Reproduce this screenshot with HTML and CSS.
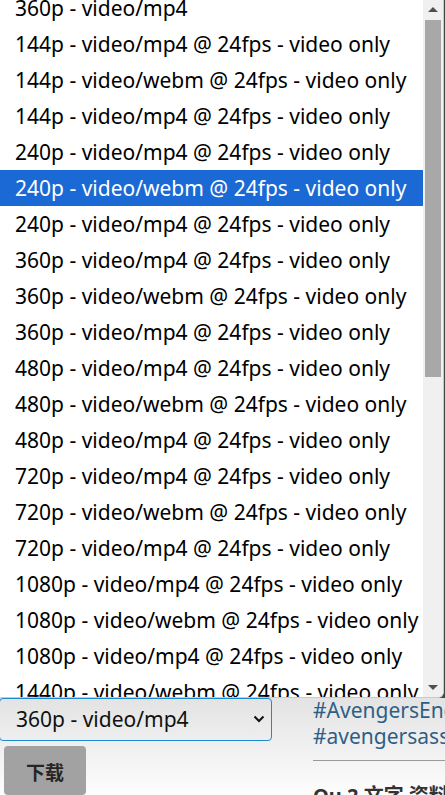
FILE: index.html
```html
<!DOCTYPE html>
<html lang="zh">
<head>
<meta charset="utf-8">
<link rel="stylesheet" href="styles.css">
</head>
<body>
<div class="page">
  <div class="left">
    <div class="select">
      <span class="select-text">360p - video/mp4</span>
      <svg class="chev" width="12" height="8" viewBox="0 0 12 8"><path d="M1.5 1.5 L6 6 L10.5 1.5" fill="none" stroke="#111" stroke-width="2"/></svg>
    </div>
    <div class="btn">下载</div>
  </div>
  <div class="right">
    <div class="tag">#AvengersEndgame</div>
    <div class="tag">#avengersassemble</div>
    <div class="rule"></div>
    <div class="more">Ou 2 文字 资料</div>
  </div>
</div>

<div class="popup">
  <div class="list">
    <div class="opt">360p - video/mp4</div>
    <div class="opt">144p - video/mp4 @ 24fps - video only</div>
    <div class="opt">144p - video/webm @ 24fps - video only</div>
    <div class="opt">144p - video/mp4 @ 24fps - video only</div>
    <div class="opt">240p - video/mp4 @ 24fps - video only</div>
    <div class="opt sel">240p - video/webm @ 24fps - video only</div>
    <div class="opt">240p - video/mp4 @ 24fps - video only</div>
    <div class="opt">360p - video/mp4 @ 24fps - video only</div>
    <div class="opt">360p - video/webm @ 24fps - video only</div>
    <div class="opt">360p - video/mp4 @ 24fps - video only</div>
    <div class="opt">480p - video/mp4 @ 24fps - video only</div>
    <div class="opt">480p - video/webm @ 24fps - video only</div>
    <div class="opt">480p - video/mp4 @ 24fps - video only</div>
    <div class="opt">720p - video/mp4 @ 24fps - video only</div>
    <div class="opt">720p - video/webm @ 24fps - video only</div>
    <div class="opt">720p - video/mp4 @ 24fps - video only</div>
    <div class="opt">1080p - video/mp4 @ 24fps - video only</div>
    <div class="opt">1080p - video/webm @ 24fps - video only</div>
    <div class="opt">1080p - video/mp4 @ 24fps - video only</div>
    <div class="opt">1440p - video/webm @ 24fps - video only</div>
  </div>
  <div class="scroll">
    <div class="arrow up"></div>
    <div class="thumb"></div>
    <div class="arrow down"></div>
  </div>
</div>
</body>
</html>
```
FILE: styles.css
```css
html, body {
  margin: 0;
  padding: 0;
  width: 445px;
  height: 795px;
  overflow: hidden;
  font-family: "Noto Sans", "Noto Sans CJK SC", sans-serif;
}
.page {
  position: relative;
  height: 795px;
  box-sizing: border-box;
  padding-top: 698px;
  display: flex;
  background: linear-gradient(#444 0, #444 698px, #e3e3e3 698px, #fdfdfd 795px);
}
.left {
  width: 313px;
  display: flex;
  flex-direction: column;
  gap: 5px;
}
.select {
  margin-left: -1px;
  width: 273px;
  height: 44px;
  box-sizing: border-box;
  border: 1px solid #1a8ad6;
  border-radius: 4px;
  display: flex;
  align-items: center;
  justify-content: space-between;
  padding: 0 6px 0 16px;
  font-size: 21px;
  color: #111;
}
.select-text { line-height: 1; }
.btn {
  margin-left: 4px;
  width: 82px;
  height: 50px;
  background: #a2a2a2;
  border-radius: 4px;
  font-weight: bold;
  font-size: 19px;
  color: #262626;
  display: flex;
  justify-content: center;
  padding-top: 12px;
  box-sizing: border-box;
}
.right {
  flex: 1;
  overflow: hidden;
  white-space: nowrap;
}
.tag {
  font-size: 21px;
  line-height: 26px;
  color: #2d5f86;
}
.tag:first-child { margin-top: -1px; }
.rule {
  height: 1px;
  background: #9a9a9a;
  margin-top: 11px;
}
.more {
  margin-top: 19px;
  font-size: 20px;
  font-weight: bold;
  color: #333;
}
.popup {
  position: absolute;
  left: 0;
  top: 0;
  width: 444px;
  height: 698px;
  box-sizing: border-box;
  background: #fff;
  border-right: 1px solid #c9c9c9;
  border-bottom: 1px solid #c9c9c9;
  border-bottom-right-radius: 6px;
  overflow: hidden;
  display: flex;
}
.list {
  flex: 1;
  margin-top: -10px;
}
.opt {
  height: 36px;
  line-height: 36px;
  padding-left: 15px;
  font-size: 21px;
  color: #000;
  white-space: nowrap;
}
.opt.sel {
  background: #1a69d4;
  color: #fff;
}
.scroll {
  width: 20px;
  background: #f0f0f0;
  display: flex;
  flex-direction: column;
  align-items: center;
}
.arrow {
  width: 0;
  height: 0;
  border-left: 5px solid transparent;
  border-right: 5px solid transparent;
}
.arrow.up {
  margin-top: 7px;
  border-bottom: 5px solid #505050;
}
.arrow.down {
  margin-top: auto;
  margin-bottom: 7px;
  border-top: 5px solid #505050;
}
.thumb {
  margin-top: 8px;
  width: 16px;
  height: 357px;
  background: #a8a8a8;
}
```
